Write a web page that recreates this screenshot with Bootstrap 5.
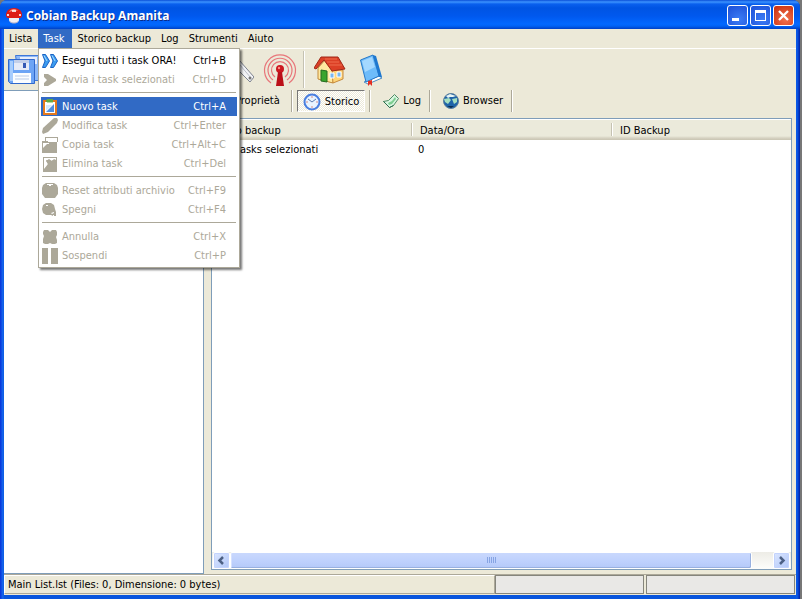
<!DOCTYPE html>
<html lang="it">
<head>
<meta charset="utf-8">
<meta name="viewport" content="width=device-width, initial-scale=1">
<title>Cobian Backup Amanita</title>
<link rel="stylesheet" href="https://cdn.jsdelivr.net/npm/bootstrap@5.3.0/dist/css/bootstrap.min.css">
<style>
body{font:11px/19px Tahoma,"DejaVu Sans Condensed",sans-serif;color:#000;background:#777}
button{font:inherit;color:inherit;background:none;border:0;padding:0}
svg{display:block;flex:none}
.app-window{margin-right:2px;padding:0 4px 4px;background:linear-gradient(90deg,#0831d9,#166aee 3px,#0855dd 4px,#0855dd calc(100% - 4px),#0a5bee calc(100% - 3px),#001ea0);border-radius:7px 7px 0 0;overflow:hidden}
.title-bar{height:29px;margin:0 -4px;padding:2px 6px 0 6px;background:linear-gradient(#0a4fd8,#3c93ff 2px,#0a60ee 4px,#0054e3 8px,#0058ee 16px,#0268ff 24px,#0062f5 26px,#0040c5 29px)}
.title-text{font:bold 12px/20px "Trebuchet MS","Open Sans",sans-serif;color:#fff;text-shadow:1px 1px #0b2b88;margin:0}
.win-btns{gap:2px}
.win-btn{width:21px;height:21px;border:1px solid #fff;border-radius:3px;background:radial-gradient(circle at 60% 70%,#3c7cf5,#2257dc 80%)}
.win-btn.close-btn{background:radial-gradient(circle at 60% 70%,#f0714d,#cf3514 85%)}
.face{background:#ece9d8}
.menu-bar{height:20px;border-bottom:1px solid #fff}
.menu-bar button{height:19px;line-height:20px;padding:0 5px}
.menu-bar button:first-child{padding-right:6px}
.menu-bar .active{background:#316ac5;color:#fff;padding-right:7px}
.menu-bar .active+button{padding-left:6px}
.tool-bar{height:41px}
.tool-group{margin-left:176px}
.tool-link{margin-left:9px}
.tool-sep{width:2px;height:37px;margin-left:6px;border-left:1px solid #c5c2b2;border-right:1px solid #fff}
.work-area,.main-panel{min-height:0;min-width:0}
.side-panel{width:200px;border:1px solid #7f9db9;border-left:0;background:#fff}
.main-panel{margin-left:7px;padding-bottom:4px}
.tab-row{height:28px;padding:0 0 6px 24px}
.tab-row>*{height:22px}
.tab-row button{line-height:22px;padding:0 8px}
.tab-row button:first-child{padding:0 11px 0 0}
.tab-sep{width:2px;border-left:1px solid #aca899;border-right:1px solid #fff}
.tab-row .pressed{padding:1px 5px 0;border:1px solid;border-color:#777 #fff #fff #777;background:repeating-conic-gradient(#fff 0 25%,#ece9d8 0 50%) 0 0/2px 2px}
.list-frame{border:1px solid #7f9db9;background:#fff;margin-right:4px}
.history{table-layout:fixed;width:100%;border-collapse:separate;border-spacing:0}
.history th{height:21px;font-weight:400;padding:1px 9px 0;line-height:17px;background:linear-gradient(#fff 1px,#ebeadb 1px,#ebeadb 17px,#d6d2c2 19px,#c9c5b2)}
.history th+th{background:linear-gradient(#c5c2b2,#c5c2b2) 0 4px/1px 13px no-repeat,linear-gradient(#fff,#fff) 1px 4px/1px 13px no-repeat,linear-gradient(#fff 1px,#ebeadb 1px,#ebeadb 17px,#d6d2c2 19px,#c9c5b2)}
.history th:first-child{width:199px}
.history th:nth-child(2){width:200px}
.history td{padding:0 7px}
.history td:first-child{padding-left:24px}
.scroll-bar{height:17px;background:linear-gradient(#edece6,#fdfdfb);padding:0 1px}
.scroll-btn{width:17px;height:17px;border:1px solid #fff;border-radius:2px;background:linear-gradient(135deg,#dbe6ff,#b1c7f8);box-shadow:inset 0 0 0 1px #c3d3fd}
.scroll-thumb{height:17px;flex:520 1 0;border:1px solid #fff;border-radius:2px;background:linear-gradient(#c9d8fd,#bdd0fd 60%,#b4c9f8);box-shadow:inset -1px -1px #98b0e0,inset 1px 0 #d5e1ff}
.scroll-rest{flex:21 1 0}
.status-bar{height:21px;gap:2px;border-top:1px solid #aca899;padding:0 1px 1px 0}
.status-bar p{margin:0 -2px 0 0;line-height:18px;padding-left:3px;border:1px solid;border-color:#fff #aca899 #aca899 #fff}
.status-box{width:149px;border:1px solid #85857c;background:#e9e8e6}
.task-menu{position:absolute;left:34px;top:19px;z-index:5;width:202px;padding:2px 2px 2px;border:1px solid #aca899;background:#fff;box-shadow:2px 2px 2px #0008}
.task-menu button{width:100%;height:19px;padding:0 11px 0 1px;gap:4px}
.task-menu button:disabled{color:#aca899}
.task-menu .chosen{background:#316ac5;color:#fff}
.task-menu hr{margin:3px 1px 4px;border-top:1px solid #aca899;opacity:1}
</style>
<script src="https://cdn.jsdelivr.net/npm/bootstrap@5.3.0/dist/js/bootstrap.bundle.min.js"></script>
</head>
<body>
<div class="app-window vh-100 d-flex flex-column">
 <header class="title-bar d-flex align-items-center">
  <svg width="16" height="16" viewBox="0 0 16 16"><path d="M3 9h10v3c0 2-2 3-5 3s-5-1-5-3z" fill="#f3eef0"/><path d="M4 13c2 2 6 2 8 0v1c-2 2-6 2-8 0z" fill="#b9b4c8"/><path d="M0 7C0 3 3 0 8 0s8 3 8 7c0 2-1 3-2 3H2C1 10 0 9 0 7z" fill="#dd1a14"/><path d="M3 4c1-2 3-3 5-3s3 1 4 2c-3-1-6 0-9 1z" fill="#ff8e80"/><path d="M6 2h4v2H6zM1 6h2v2H1zM13 6h2v2h-2z" fill="#fff" opacity=".8"/></svg>
  <h1 class="title-text ms-1 me-auto">Cobian Backup Amanita</h1>
  <div class="win-btns d-flex">
   <button class="win-btn" aria-label="Riduci"><svg width="19" height="19"><path d="M4 12h7v3H4z" fill="#fff"/></svg></button>
   <button class="win-btn" aria-label="Ingrandisci"><svg width="19" height="19"><path d="M4 4h11v11H4zM5 7v7h9V7z" fill="#fff" fill-rule="evenodd"/></svg></button>
   <button class="win-btn close-btn" aria-label="Chiudi"><svg width="19" height="19"><path d="M5 5l9 9M14 5l-9 9" stroke="#fff" stroke-width="2.300"/></svg></button>
  </div>
 </header>
 <div class="position-relative">
  <nav class="menu-bar face d-flex">
   <button>Lista</button><button class="active" aria-expanded="true">Task</button><button>Storico backup</button><button>Log</button><button>Strumenti</button><button>Aiuto</button>
  </nav>
  <div class="task-menu">
   <button class="d-flex align-items-center"><svg width="16" height="16" viewBox="0 0 16 16"><path d="M.5 1.500h3l4 6.500-4 6.500h-3L3 8zM8.500 1.500h3l4 6.500-4 6.500h-3L11 8z" fill="#3c9cf0" stroke="#1a62c4"/><path d="M2 2.500L5 8M10 2.500L13 8" stroke="#a5dcff"/></svg><span>Esegui tutti i task ORA!</span><span class="ms-auto">Ctrl+B</span></button>
   <button disabled class="d-flex align-items-center"><svg width="16" height="16" viewBox="0 0 16 16" fill="#aca899"><path d="M2 2h4l8 5v2l-8 5H2v-3l3-3-3-3z"/></svg><span>Avvia i task selezionati</span><span class="ms-auto">Ctrl+D</span></button>
   <hr>
   <button class="chosen d-flex align-items-center"><svg width="16" height="16" viewBox="0 0 16 16"><path d="M1 1h14v15H1z" fill="#e4791e"/><path d="M3 3h10v11H3z" fill="#fff"/><path d="M5 0h6v3H4V2z" fill="#62ab45"/><path d="M5 3h6v1H5z" fill="#b9dca4"/><path d="M12 5v8H4z" fill="#4f8ee0"/><path d="M4 6h6l-6 6z" fill="#d4eaff"/></svg><span>Nuovo task</span><span class="ms-auto">Ctrl+A</span></button>
   <button disabled class="d-flex align-items-center"><svg width="16" height="16" viewBox="0 0 16 16" fill="#aca899"><path d="M12 0h3l1 2-1 3-9 9-5 2-1-2 1-4z"/></svg><span>Modifica task</span><span class="ms-auto">Ctrl+Enter</span></button>
   <button disabled class="d-flex align-items-center"><svg width="16" height="16" viewBox="0 0 16 16" fill="#aca899"><path d="M3 0h13v5h-1V1H4v3H3zM0 4h6v1h9v11H0z"/><path d="M1 6h6v1H5l-4 4z" fill="#fff"/></svg><span>Copia task</span><span class="ms-auto">Ctrl+Alt+C</span></button>
   <button disabled class="d-flex align-items-center"><svg width="16" height="16" viewBox="0 0 16 16" fill="#aca899"><path d="M1 1h14v15H1z"/><path d="M2 2h12v2l-2-1-2 2-3-2-3 2 2 3-4 5z" fill="#fff"/><path d="M4 4h2l2 2 3-2 2 1v6H5l1-3z"/></svg><span>Elimina task</span><span class="ms-auto">Ctrl+Del</span></button>
   <hr>
   <button disabled class="d-flex align-items-center"><svg width="16" height="16" viewBox="0 0 16 16" fill="#aca899"><path d="M4 0h8l3 2 1 3v6l-3 4H3l-3-4V5l1-3z"/><path d="M5 1h6v1H9v1H7V2H5z" fill="#fff"/></svg><span>Reset attributi archivio</span><span class="ms-auto">Ctrl+F9</span></button>
   <button disabled class="d-flex align-items-center"><svg width="16" height="16" viewBox="0 0 16 16" fill="#aca899"><path d="M4 1h5l3 2 1 4 1 3v4h-3l-2-1H4l-3-2-1-4 1-4z"/><path d="M4 3h2v1H4zM9 11l3-1v1l-2 1zM11 13h1v1h-1z" fill="#fff"/></svg><span>Spegni</span><span class="ms-auto">Ctrl+F4</span></button>
   <hr>
   <button disabled class="d-flex align-items-center"><svg width="16" height="16" viewBox="0 0 16 16" fill="#aca899"><path d="M2 1h4l2 2 2-2h4l1 2v3l-1 2 1 3v3l-2 1h-3l-2-1-2 1H3l-2-1v-4l1-3-1-2V3z"/></svg><span>Annulla</span><span class="ms-auto">Ctrl+X</span></button>
   <button disabled class="d-flex align-items-center"><svg width="16" height="16" viewBox="0 0 16 16" fill="#aca899"><path d="M0 0h6v16H0zM9 0h7v16H9z"/></svg><span>Sospendi</span><span class="ms-auto">Ctrl+P</span></button>
  </div>
 </div>
 <div class="tool-bar face d-flex align-items-center">
  <button class="ms-1" aria-label="Salva"><svg width="38" height="32" viewBox="0 0 38 32"><path d="M7.500 1.500h30v25h-26z" fill="#8db8f7" stroke="#3f78d8"/><path d="M12 3h17v7H12z" fill="#e8eefb"/><path d="M.5 5.500h26v24h-24l-2-2z" fill="#6ca4f5" stroke="#3169cc"/><path d="M2 7h3v20H2z" fill="#a8cdfd"/><path d="M6 6h15v10H6z" fill="#e6eaf7"/><path d="M6 6h15v3H6z" fill="#c3cfea"/><path d="M15 9h3v5h-3z" fill="#3559b5"/><path d="M5 19h18v10H5z" fill="#fbfdff"/><path d="M7 22h14M7 25h14" stroke="#b9cbe8"/></svg></button>
  <div class="tool-group d-flex align-items-center">
   <button aria-label="Strumenti"><svg width="32" height="32" viewBox="0 0 32 32"><path d="M17 6l15 17-4 5L13 13z" fill="#f2f3f6" stroke="#7d828e"/><path d="M18 11l11 13" stroke="#b9bdc8"/><circle cx="28" cy="24" r="1.500" fill="#777"/></svg></button>
   <button class="tool-link" aria-label="Connessione"><svg width="34" height="34" viewBox="0 0 34 34"><g fill="none" stroke="#e8767a" stroke-width="1.200"><path d="M8 30a15.500 15.500 0 1 1 18 0"/><path d="M10 27a12 12 0 1 1 14 0"/><path d="M12 24a8.500 8.500 0 1 1 10 0"/></g><circle cx="17" cy="16" r="4" fill="#cc1820"/><path d="M15 19h4l2 14h-8z" fill="#bb1019"/><circle cx="16" cy="15" r="1.200" fill="#ff8a80"/></svg></button>
   <span class="tool-sep"></span>
   <button class="tool-link" aria-label="Sito"><svg width="32" height="30" viewBox="0 0 32 30"><path d="M4 13l7-8 8 12v11L4 24z" fill="#ffe9a0" stroke="#c28a3a"/><path d="M18 15h11v9l-10 4z" fill="#ffd67a" stroke="#c68a3f"/><path d="M7 2h17l7 12-13 2L10 5 2 14l-2-1z" fill="#dc4026" stroke="#a02818"/><path d="M11 4h12M13 7h12M15 10h13" stroke="#ef6d4c"/><path d="M7 15l6 1v11l-6-1z" fill="#3aa52e" stroke="#236c20"/><path d="M16 18h4v5h-4zM23 17h4v5h-4z" fill="#79b8f2" stroke="#fff"/></svg></button>
   <button class="tool-link ps-1" aria-label="Guida"><svg width="26" height="32" viewBox="0 0 26 32"><path d="M5 28l15-6 3 2-14 6z" fill="#fff" stroke="#4c8cc4"/><path d="M1.500 6L14 1l6 21-13 6z" fill="#6ebcfa" stroke="#2678c8"/><path d="M3 7l10-4 3 10L6 18z" fill="#a4d8ff"/><path d="M14 1l3 1 6 21-3 0z" fill="#1e78d0"/><path d="M9 27l4-1v6l-2-2-2 2z" fill="#e32f22"/></svg></button>
  </div>
 </div>
 <main class="work-area face flex-grow-1 d-flex">
  <aside class="side-panel flex-shrink-0"></aside>
  <section class="main-panel flex-grow-1 d-flex flex-column">
   <div class="tab-row d-flex align-items-center">
    <button>Proprietà</button><span class="tab-sep"></span>
    <button class="pressed d-flex align-items-center gap-1 ms-1"><svg width="18" height="18" viewBox="0 0 18 18"><circle cx="9" cy="9" r="7.500" fill="#e8f3ff" stroke="#4a7fe0" stroke-width="2"/><path d="M5 6l4 3 4-3" stroke="#5b7bb0" fill="none"/><path d="M9 3v2M9 13v2M3 9h2M13 9h2" stroke="#d98f88"/></svg><span>Storico</span></button>
    <span class="tab-sep ms-1"></span>
    <button class="d-flex align-items-center gap-1 ms-1"><svg width="16" height="16" viewBox="0 0 16 16"><path d="M.5 8.500l5-1 6-6 4 4-5 7-4 2z" fill="#d9f6e0" stroke="#4f8a66"/><path d="M5 10l4-2 3-4 1 2-4 5-3 1z" fill="#7fce92"/><path d="M.5 8.500l6 6 4-2" stroke="#2c6c4c" fill="none"/></svg><span>Log</span></button>
    <span class="tab-sep"></span>
    <button class="d-flex align-items-center gap-1 ms-1"><svg width="16" height="16" viewBox="0 0 16 16"><circle cx="8" cy="8" r="7.500" fill="#1f63a8" stroke="#5c7f9c"/><path d="M3 3l4-2 6 2-3 1H7L5 5z" fill="#e9f4f2"/><path d="M1 6l5-1 2 2-3 4-3-2zM9 6l5-1v4l-3 2z" fill="#a5dfc0"/><path d="M4 13h7l-3 2z" fill="#0c2c50"/></svg><span>Browser</span></button>
    <span class="tab-sep"></span>
   </div>
   <div class="list-frame flex-grow-1 d-flex flex-column">
    <table class="history"><thead><tr><th>Tipo backup</th><th>Data/Ora</th><th>ID Backup</th></tr></thead><tbody><tr><td>tasks selezionati</td><td>0</td><td></td></tr></tbody></table>
    <div class="scroll-bar mt-auto d-flex">
     <button class="scroll-btn" aria-label="Sinistra"><svg width="15" height="15"><path d="M9 4L5.500 7.500 9 11" fill="none" stroke="#4d6185" stroke-width="2.500"/></svg></button>
     <span class="scroll-thumb d-flex align-items-center justify-content-center"><svg width="9" height="7"><path d="M.5 0v6M2.500 0v6M4.500 0v6M6.500 0v6M8.500 0v6" stroke="#86a4e3"/></svg></span><span class="scroll-rest"></span>
     <button class="scroll-btn" aria-label="Destra"><svg width="15" height="15"><path d="M6 4l3.500 3.500L6 11" fill="none" stroke="#4d6185" stroke-width="2.500"/></svg></button>
    </div>
   </div>
  </section>
 </main>
 <footer class="status-bar face d-flex"><p class="flex-grow-1">Main List.lst (Files: 0, Dimensione: 0 bytes)</p><span class="status-box"></span><span class="status-box"></span></footer>
</div>
</body>
</html>
